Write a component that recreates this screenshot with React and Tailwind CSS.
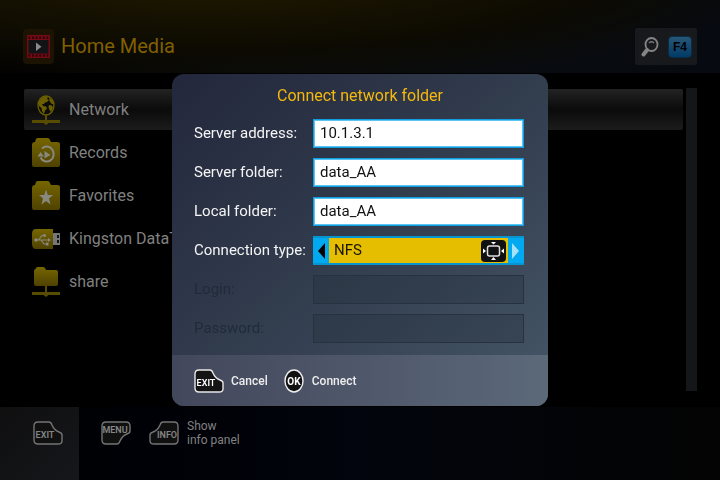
import React, { useState } from 'react';

const FOLDER = 'M0 7 Q0 4 3 4 L4 1 Q4.500 0 6 0 L15 0 Q17 0 17.500 1 L19 4 L25 4 Q28 4 28 6 L28 27 Q28 29 26 29 L2 29 Q0 29 0 27 Z';

const Gold = ({ id }) => (
  <defs>
    <linearGradient id={id} x1="0" y1="0" x2="0" y2="1">
      <stop offset="0" stopColor="#766600" />
      <stop offset="1" stopColor="#4f4200" />
    </linearGradient>
  </defs>
);

const NetworkIcon = () => (
  <svg className="w-7 h-[30px] shrink-0" viewBox="0 0 28 30" aria-hidden="true">
    <ellipse cx="14" cy="10.500" rx="8" ry="9.500" fill="#0c0c0c" stroke="#6c5f00" strokeWidth="1.300" />
    <path
      d="M7 7 L9 3.500 L12 2 L16 2 L15 4 L17 5 L15 7 L13 7.500 L12 9 L10 9 L11 11 L14 11.500 L15 13.500 L13 15.500 L12 19 L10 16 L9.500 13 L7 11 Z M17 3 L20 5 L21.500 9 L20 9 L18.500 7.500 L17.500 6 Z M17 10 L20 10.500 L21 13 L19 17 L17.500 15 L16.500 12 Z"
      fill="#6c5f00"
    />
    <path d="M13 20 H15 V25 H28 V28 H16.500 L14 30 L11.500 28 H0 V25 H13 Z" fill="#574c00" />
  </svg>
);

const RecordsIcon = () => (
  <svg className="w-7 h-[29px] shrink-0" viewBox="0 0 28 29" aria-hidden="true">
    <Gold id="records" />
    <path d={FOLDER} fill="url(#records)" />
    <path d="M10 10.500 A7 7.500 0 1 1 8.500 19.500" fill="none" stroke="#888880" strokeWidth="2" />
    <path d="M5.500 18.500 L8.500 14 L12 18.500 Z M12.500 13 L18.500 17 L12.500 20.500 Z" fill="#888880" />
  </svg>
);

const FavoritesIcon = () => (
  <svg className="w-7 h-[29px] shrink-0" viewBox="0 0 28 29" aria-hidden="true">
    <Gold id="favorites" />
    <path d={FOLDER} fill="url(#favorites)" />
    <path d="M14 8.500 L15.800 14 L21 14 L17 17.500 L18.500 23.500 L14 20 L9.500 23.500 L11 17.500 L7 14 L12.200 14 Z" fill="#888880" />
  </svg>
);

const UsbIcon = () => (
  <svg className="w-7 h-5 shrink-0" viewBox="0 0 28 20" aria-hidden="true">
    <Gold id="usb" />
    <path d="M4 0 H21 V20 H4 Q0 20 0 15 V5 Q0 0 4 0 Z" fill="url(#usb)" />
    <path d="M21 4 H28 V16 H21 Z" fill="#777" />
    <path d="M25 6 H27 V9 H25 Z M25 11 H27 V14 H25 Z" fill="#111" />
    <path d="M4 11 H17 M6.500 11 L10 6.500 H12 M9 11 L12 15 H15" fill="none" stroke="#888880" strokeWidth="1.200" />
    <circle cx="4" cy="11" r="1.800" fill="#888880" />
    <circle cx="12.500" cy="6.500" r="1.500" fill="#888880" />
    <path d="M16 9 L19 11 L16 13 Z M14 13.500 H16.500 V16.500 H14 Z" fill="#888880" />
  </svg>
);

const ShareIcon = () => (
  <svg className="w-7 h-[30px] shrink-0" viewBox="0 0 28 30" aria-hidden="true">
    <Gold id="share" />
    <path d="M2 4 Q2 2.500 3.500 2 L4 1 Q4.500 0 6 0 H11 Q12.500 0 13 1 L14 3 H24 Q26 3 26 5 V17 Q26 19 24 19 H4 Q2 19 2 17 Z" fill="url(#share)" />
    <path d="M13 19 H15 V25 H28 V28 H16.500 L14 30 L11.500 28 H0 V25 H13 Z" fill="#574c00" />
  </svg>
);

const FilmIcon = () => (
  <svg className="w-[23px] h-[23px]" viewBox="0 0 23 23" aria-hidden="true">
    <rect width="23" height="23" fill="#750914" />
    <path d="M1.500 2.800 H22 M1.500 20.500 H22" stroke="#260408" strokeWidth="2.600" strokeDasharray="1.800 1.800" />
    <rect x="1.500" y="5" width="20" height="13.500" fill="#111314" />
    <path d="M9 7.500 L14.500 11.800 L9 16 Z" fill="#8a8a8a" />
  </svg>
);

const SearchIcon = () => (
  <svg className="w-[18px] h-5" viewBox="0 0 18 20" aria-hidden="true">
    <ellipse cx="10.500" cy="7.500" rx="6" ry="6.500" fill="none" stroke="#858585" strokeWidth="1.800" />
    <path d="M8 6 Q10.500 3.500 13 6" fill="none" stroke="#777" strokeWidth="1.300" />
    <path d="M6 13 L2.500 17.500" stroke="#858585" strokeWidth="4" strokeLinecap="round" />
  </svg>
);

const KEY_SHAPES = {
  EXIT: { d: 'M5 1 H16 Q18 1 19 4 Q21 9 26 11 Q29 12 29 14 V20 Q29 23 25 23 H5 Q1 23 1 19 V5 Q1 1 5 1 Z', x: 12, y: 17 },
  MENU: { d: 'M5 1 H25 Q29 1 29 5 V10 Q29 12 26 13 Q21 15 19 20 Q18 23 16 23 H5 Q1 23 1 19 V5 Q1 1 5 1 Z', x: 14, y: 12 },
  INFO: { d: 'M25 1 H14 Q12 1 11 4 Q9 9 4 11 Q1 12 1 14 V20 Q1 23 5 23 H25 Q29 23 29 19 V5 Q29 1 25 1 Z', x: 18, y: 17 },
};

const KeyIcon = ({ name, bright }) => {
  const { d, x, y } = KEY_SHAPES[name];
  return (
    <svg className="w-[30px] h-6 shrink-0" viewBox="0 0 30 24" aria-hidden="true">
      <path d={d} fill={bright ? '#141414' : '#101010'} stroke={bright ? '#e8e8e8' : '#747474'} strokeWidth="1.400" />
      <text
        x={x}
        y={y}
        textAnchor="middle"
        className="font-['Roboto',sans-serif] font-semibold text-[9px]"
        fill={bright ? '#fff' : '#858585'}
      >
        {name}
      </text>
    </svg>
  );
};

const OkIcon = () => (
  <svg className="w-5 h-6 shrink-0" viewBox="0 0 20 24" aria-hidden="true">
    <ellipse cx="10" cy="12" rx="9" ry="11" fill="#111" stroke="#eee" strokeWidth="1.400" />
    <text x="10" y="16" textAnchor="middle" className="font-['Roboto',sans-serif] font-bold text-[10px]" fill="#fff">
      OK
    </text>
  </svg>
);

const ScreenIcon = () => (
  <svg className="w-[25px] h-[22px] shrink-0" viewBox="0 0 25 22" aria-hidden="true">
    <rect width="25" height="22" rx="4" fill="#111" />
    <rect x="6.500" y="6" width="12" height="10" rx="2" fill="none" stroke="#ddd" strokeWidth="1.500" />
    <path d="M10 2 H15 L12.500 4.500 Z M10 20 H15 L12.500 17 Z M2 8.500 V13.500 L5 11 Z M23 8.500 V13.500 L20 11 Z" fill="#fff" />
  </svg>
);

const items = [
  { label: 'Network', Icon: NetworkIcon },
  { label: 'Records', Icon: RecordsIcon },
  { label: 'Favorites', Icon: FavoritesIcon },
  { label: 'Kingston DataTraveler', Icon: UsbIcon },
  { label: 'share', Icon: ShareIcon },
];

const types = ['NFS', 'SMB'];

const Field = ({ id, label, disabled, children }) => (
  <div className="flex items-center h-[29px]">
    <label htmlFor={id} className={`w-[119px] shrink-0 whitespace-nowrap pb-0.5 ${disabled ? 'text-[#202b39]' : 'text-[#f4f4f4]'}`}>
      {label}
    </label>
    {children}
  </div>
);

const TextField = ({ id, label, type = 'text', value, onChange, disabled }) => (
  <Field id={id} label={label} disabled={disabled}>
    <input
      id={id}
      type={type}
      value={value}
      onChange={onChange}
      disabled={disabled}
      className={`flex-1 min-w-0 h-full px-1.5 pb-0.5 border outline-none ${
        disabled ? 'border-[#27323e] bg-[#202c38]/30' : 'border-[#0f9fe0] bg-white text-[#111] inset-ring inset-ring-[#5cc4f2]'
      }`}
    />
  </Field>
);

const ConnectDialog = () => {
  const [form, setForm] = useState({ address: '10.1.3.1', folder: 'data_AA', local: 'data_AA', type: 'NFS' });

  const onChange = (name) => (e) => setForm({ ...form, [name]: e.target.value });
  const toggleType = () => setForm({ ...form, type: form.type === 'NFS' ? 'SMB' : 'NFS' });

  return (
    <div className="fixed inset-0 flex items-center justify-center">
      <form
        onSubmit={(e) => e.preventDefault()}
        role="dialog"
        aria-labelledby="dialog-title"
        className="w-full max-w-[376px] rounded-xl overflow-hidden bg-linear-to-br from-[#23273b] via-[#323d4e] to-[#465768] text-[15px] leading-5"
      >
        <h2 id="dialog-title" className="pt-3 pb-[13px] text-center text-base leading-5 text-[#f5b90c]">
          Connect network folder
        </h2>
        <div className="flex flex-col gap-2.5 pl-[22px] pr-6 pb-3">
          <TextField id="address" label="Server address:" value={form.address} onChange={onChange('address')} />
          <TextField id="folder" label="Server folder:" value={form.folder} onChange={onChange('folder')} />
          <TextField id="local" label="Local folder:" value={form.local} onChange={onChange('local')} />
          <Field id="type" label="Connection type:">
            <div className="flex flex-1 min-w-0 h-full border-y-2 border-[#0795d2] bg-[#00a9f0]">
              <button type="button" aria-label="Previous type" onClick={toggleType} className="w-4 flex items-center justify-end pr-1">
                <svg className="w-[7px] h-4" viewBox="0 0 7 16"><path d="M7 0 V16 L0 8 Z" fill="#000" /></svg>
              </button>
              <div className="flex flex-1 min-w-0 items-center bg-[#e5be00] pr-0.5">
                <select
                  id="type"
                  value={form.type}
                  onChange={onChange('type')}
                  className="flex-1 min-w-0 appearance-none pl-[5px] pb-0.5 text-[#191500] outline-none"
                >
                  {types.map((t) => (
                    <option key={t}>{t}</option>
                  ))}
                </select>
                <ScreenIcon />
              </div>
              <button type="button" aria-label="Next type" onClick={toggleType} className="w-4 flex items-center pl-1">
                <svg className="w-[7px] h-4" viewBox="0 0 7 16"><path d="M0 0 V16 L7 8 Z" fill="#a5e2fa" /></svg>
              </button>
            </div>
          </Field>
          <TextField id="login" label="Login:" value="" disabled />
          <TextField id="password" label="Password:" type="password" value="" disabled />
        </div>
        <div className="flex items-center gap-4 h-[51px] pl-[22px] bg-linear-to-r from-[#43475b] to-[#5b6979] text-xs font-medium text-[#ededed]">
          <button type="button" className="flex items-center gap-[7px]">
            <KeyIcon name="EXIT" bright />
            Cancel
          </button>
          <button type="submit" className="flex items-center gap-2">
            <OkIcon />
            Connect
          </button>
        </div>
      </form>
    </div>
  );
};

const App = () => {
  return (
    <div className="min-h-screen flex flex-col bg-black font-['Roboto',sans-serif] text-[#808080]">
      <header className="h-[73px] shrink-0 flex items-center justify-between pl-[23px] pr-[23px] pt-5 bg-[radial-gradient(ellipse_at_30%_-40%,#241c00_0%,#0c0a02_55%,transparent_80%),linear-gradient(to_right,#000,#0a0c0d_35%,#070a10)]">
        <div className="flex items-center gap-[7px]">
          <span className="flex items-center justify-center w-[31px] h-[35px] rounded-sm bg-[#1c1303]">
            <FilmIcon />
          </span>
          <h1 className="pb-0.5 text-xl leading-7 text-[#806000]">Home Media</h1>
        </div>
        <button type="button" aria-label="Search" className="flex items-center justify-between w-[62px] h-[37px] pl-1.5 pr-[5px] rounded-xs bg-[#17191c]">
          <SearchIcon />
          <span className="flex items-center justify-center w-6 h-[22px] rounded border border-[#082d48] bg-linear-to-b from-[#285674] to-[#003b68] font-['Liberation_Sans'] text-xs font-bold text-black">
            F4
          </span>
        </button>
      </header>

      <main className="flex-1 flex gap-[3px] pl-6 pr-[23px] pt-[15px] pb-4">
        <ul className="flex-1 min-w-0 flex flex-col gap-0.5 pt-px">
          {items.map(({ label, Icon }, i) => (
            <li key={label}>
              <a
                href="#"
                className={`flex items-center gap-[9px] h-[41px] px-2 rounded-xs text-base ${
                  i === 0 ? 'bg-linear-to-b from-[#232323] via-[#0b0b0b] to-[#1c1c1c]' : ''
                }`}
              >
                <Icon />
                {label}
              </a>
            </li>
          ))}
        </ul>
        <div className="w-[11px] bg-[#151617]" />
      </main>

      <footer className="h-[73px] shrink-0 flex bg-linear-to-r from-[#000003] via-[#02050d] to-[#040404]">
        <button type="button" aria-label="Exit" className="w-[79px] pl-[33px] pb-[21px] bg-linear-to-br from-[#0f0f10] to-[#16171b]">
          <KeyIcon name="EXIT" />
        </button>
        <button type="button" aria-label="Menu" className="ml-[22px] pb-[21px]">
          <KeyIcon name="MENU" />
        </button>
        <button type="button" className="ml-[18px] pb-[21px] flex items-center gap-2 text-left text-xs leading-[14px]">
          <KeyIcon name="INFO" />
          <span>
            Show
            <br />
            info panel
          </span>
        </button>
      </footer>
      <ConnectDialog />
    </div>
  );
};

export default App;
